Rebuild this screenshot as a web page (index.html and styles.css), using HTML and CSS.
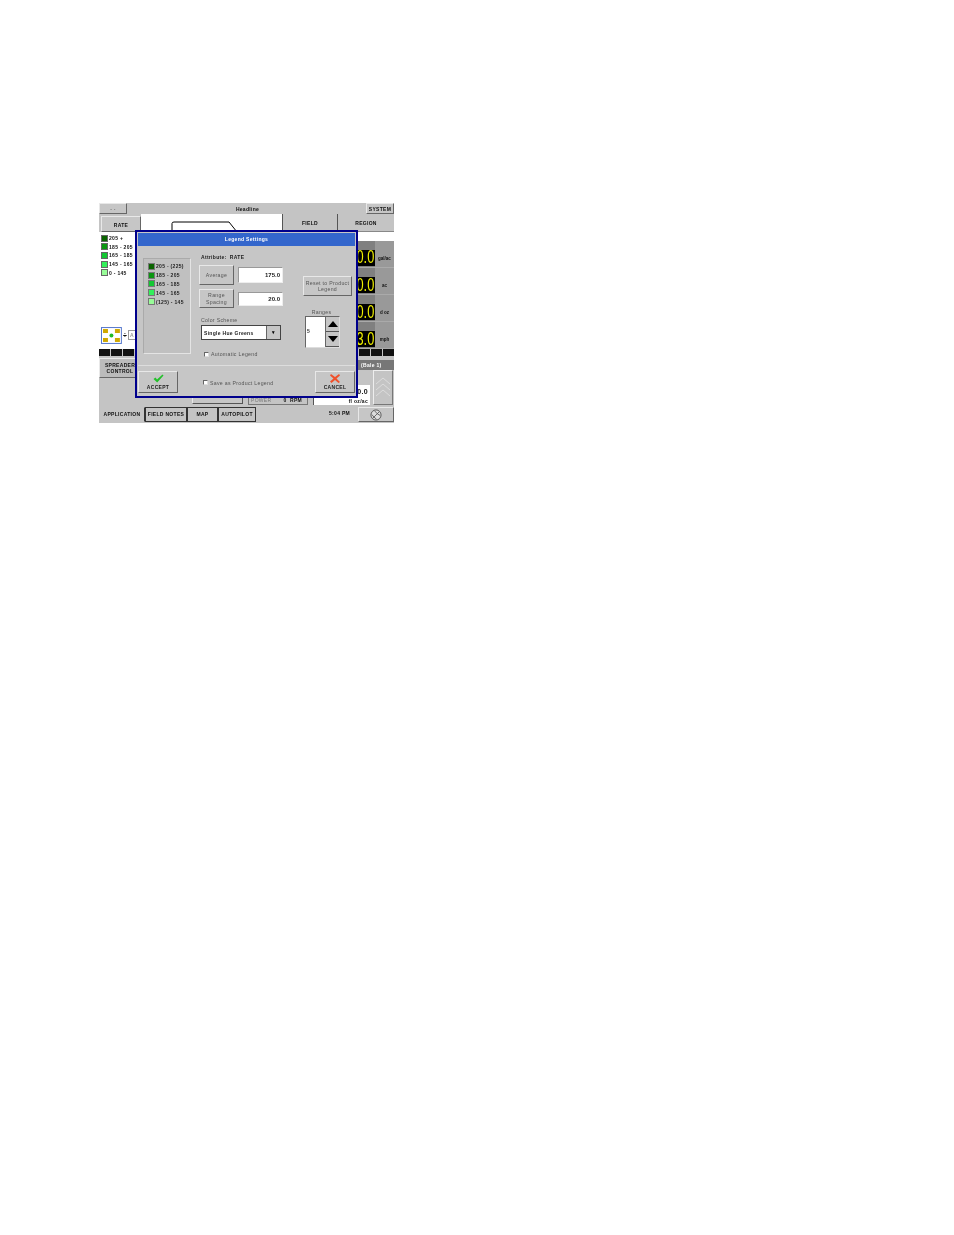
FILE: index.html
```html
<!DOCTYPE html>
<html lang="en">
<head>
<meta charset="utf-8">
<title>Legend Settings</title>
<link rel="stylesheet" href="styles.css">
</head>
<body>
<div class="app">
  <div class="topbar">
    <div class="btn dash">- -</div>
    <div class="headline">Headline</div>
    <div class="btn system">SYSTEM</div>
  </div>
  <div class="tabs2">
    <div class="rate btn">RATE</div>
    <div class="mapstrip">
      <svg class="boundary" width="141" height="18" viewBox="0 0 141 18"><path d="M31 18V9.500Q31 8 33 8H88L96 18" fill="none" stroke="#000" stroke-width="1"/></svg>
    </div>
    <div class="tab2 field">FIELD</div>
    <div class="tab2 region">REGION</div>
  </div>
  <div class="middle">
    <div class="legend">
      <div class="lrow"><i class="sw c1"></i>205 +</div>
      <div class="lrow"><i class="sw c2"></i>185 - 205</div>
      <div class="lrow"><i class="sw c3"></i>165 - 185</div>
      <div class="lrow"><i class="sw c4"></i>145 - 165</div>
      <div class="lrow"><i class="sw c5"></i>0 - 145</div>
      <div class="zoomctl">
        <svg width="21" height="17" viewBox="0 0 21 17"><rect x=".5" y=".5" width="20" height="16" fill="#fff" stroke="#5577cc"/><g fill="#d0a800"><rect x="2" y="2" width="5" height="4"/><rect x="14" y="2" width="5" height="4"/><rect x="2" y="11" width="5" height="4"/><rect x="14" y="11" width="5" height="4"/></g><circle cx="10.500" cy="8.500" r="2" fill="#22bb22"/></svg>
        <span class="updown">÷</span>
        <span class="small">A</span>
      </div>
    </div>
    <div class="mapmain"></div>
    <div class="readouts">
      <div class="top-white"></div>
      <div class="ro"><span class="digits"><span class="seg">0.0</span></span><span class="unit">gal/ac</span></div>
      <div class="ro"><span class="digits"><span class="seg">0.0</span></span><span class="unit">ac</span></div>
      <div class="ro"><span class="digits"><span class="seg">0.0</span></span><span class="unit">d oz</span></div>
      <div class="ro"><span class="digits"><span class="seg">3.0</span></span><span class="unit">mph</span></div>
    </div>
  </div>
  <div class="blackband">
    <i></i><i></i><i></i><b></b><i></i><i></i><i></i>
  </div>
  <div class="lower">
    <div class="spreader btn">SPREADER<br>CONTROL</div>
    <div class="btn wide"></div>
    <div class="rpm"><span class="power">POWER</span><span>0&nbsp;&nbsp;RPM</span></div>
    <div class="rightcol">
      <div class="baletitle">(Bale 1)</div>
      <div class="flowrow">
        <div class="flow">
          <div class="flowval">0.0</div>
          <div class="flowunit">fl oz/ac</div>
        </div>
        <div class="chev">
          <svg width="16" height="24" viewBox="0 0 16 24"><path d="M1 8 8 2 15 8M1 14 8 8 15 14M1 20 8 14 15 20" fill="none" stroke="#dcdcdc"/></svg>
        </div>
      </div>
    </div>
  </div>
  <div class="bottombar">
    <div class="bt on">APPLICATION</div>
    <div class="bt notes">FIELD NOTES</div>
    <div class="bt map">MAP</div>
    <div class="bt auto">AUTOPILOT</div>
    <div class="time">5:04 PM</div>
    <div class="globe btn"><svg width="12" height="12" viewBox="0 0 13 13"><circle cx="6.500" cy="6.500" r="5.500" fill="#ddd" stroke="#555"/><path d="M3 10 10 3M5 2Q8 6 11 7M2 6Q4 9 7 11" fill="none" stroke="#555" stroke-width=".9"/></svg></div>
  </div>

  <div class="dialog">
    <div class="dtitle">Legend Settings</div>
    <div class="dbody">
      <div class="dlegend">
        <div class="drow"><i class="dsw c1"></i>205 - (225)</div>
        <div class="drow"><i class="dsw c2"></i>185 - 205</div>
        <div class="drow"><i class="dsw c3"></i>165 - 185</div>
        <div class="drow"><i class="dsw c4"></i>145 - 165</div>
        <div class="drow"><i class="dsw c5"></i>(125) - 145</div>
      </div>
      <div class="dcenter">
        <div class="attr">Attribute:&nbsp; RATE</div>
        <div class="field-row first">
          <div class="btn gbtn avg">Average</div>
          <div class="input">175.0</div>
        </div>
        <div class="field-row second">
          <div class="btn gbtn spc">Range<br>Spacing</div>
          <div class="input short">20.0</div>
        </div>
        <div class="schemelabel">Color Scheme</div>
        <div class="select"><span class="seltext">Single Hue Greens</span><span class="selarrow">▾</span></div>
        <label class="check auto-l"><i class="cb"></i>Automatic Legend</label>
      </div>
      <div class="dright">
        <div class="btn gbtn reset">Reset to Product<br>Legend</div>
        <div class="rangeslabel">Ranges</div>
        <div class="spinner">
          <div class="spinval">5</div>
          <div class="spinbtns">
            <div class="spb"><svg width="10" height="6" viewBox="0 0 10 6"><path d="M5 0 10 6H0Z" fill="#000"/></svg></div>
            <div class="spb"><svg width="10" height="6" viewBox="0 0 10 6"><path d="M0 0H10L5 6Z" fill="#000"/></svg></div>
          </div>
        </div>
      </div>
    </div>
    <div class="dfoot">
      <div class="btn action">
        <svg width="11" height="9" viewBox="0 0 11 9"><path d="M0.500 5 2.500 3.500 4 5.500 9.500 0.500 10.500 1.500 4.200 8.500Z" fill="#22c02a"/></svg>
        <span>ACCEPT</span>
      </div>
      <label class="check save"><i class="cb"></i>Save as Product Legend</label>
      <div class="btn action">
        <svg width="10" height="9" viewBox="0 0 10 9"><path d="M1 0 5 3 9 0 10 1.500 6.500 4.500 10 8 8.500 9 5 6 1.500 9 0 7.500 3.500 4.500 0 1.500Z" fill="#f0502a"/></svg>
        <span>CANCEL</span>
      </div>
    </div>
  </div>
</div>
</body>
</html>
```
FILE: styles.css
```css
* { box-sizing: border-box; }
html, body { margin: 0; background: #fff; }
body { height: 1235px; padding: 203px 0 0 99px; font-family: "Liberation Sans", Arial, sans-serif; overflow: hidden; }
.app { position: relative; width: 295px; height: 220px; background: #c4c4c4; display: flex; flex-direction: column; font-size: 5px; letter-spacing: .3px; color: #111; filter: blur(.35px); }
.btn { background: #c6c6c6; border: 1px solid; border-color: #e8e8e8 #666 #666 #e8e8e8; display: flex; align-items: center; justify-content: center; text-align: center; }
.topbar { height: 11px; display: flex; align-items: stretch; }
.dash { width: 28px; color: #555; }
.headline { flex: 1; text-align: center; font-weight: 700; line-height: 12px; padding-left: 2px; }
.system { width: 28px; font-weight: 700; }
.tabs2 { height: 18px; display: flex; }
.rate { width: 40px; margin-left: 2px; margin-top: 2px; padding-top: 2px; font-weight: 700; }
.mapstrip { width: 141px; background: #fff; }
.boundary { display: block; }
.tab2 { display: flex; align-items: center; justify-content: center; font-weight: 700; border-left: 1px solid #555; border-bottom: 1px solid #888; background: #c4c4c4; }
.field { width: 55px; }
.region { width: 57px; }
.middle { height: 117px; display: flex; background: #fff; }
.legend { width: 37px; padding: 2px 0 0 2px; display: flex; flex-direction: column; font-weight: 700; font-size: 5px; }
.lrow { display: flex; align-items: center; gap: 1px; height: 8.600px; white-space: nowrap; }
.sw { width: 7px; height: 7px; border: 1px solid #666; flex: none; }
.c1 { background: #0a6400; }
.c2 { background: #0a9610; }
.c3 { background: #12c832; }
.c4 { background: #32f05a; }
.c5 { background: #98fc98; }
.zoomctl { margin-top: 50px; display: flex; align-items: center; gap: 1px; }
.updown { font-size: 7px; }
.small { width: 8px; height: 10px; border: 1px solid #999; color: #999; text-align: center; line-height: 8px; }
.mapmain { flex: 1; }
.readouts { width: 37px; display: flex; flex-direction: column; background: #808080; }
.top-white { height: 9px; background: #fff; }
.ro { height: 27px; display: flex; align-items: stretch; justify-content: flex-end; border-bottom: 1px solid #aaa; }
.digits { width: 18px; margin: 9px 0 1px; background: #000; display: flex; align-items: center; justify-content: flex-end; padding-right: 1px; }
.seg { display: block; flex: none; color: #f0f000; font-size: 16px; line-height: 16px; letter-spacing: 0; transform: scale(.8, 1.1); transform-origin: right center; white-space: nowrap; }
.unit { width: 19px; font-weight: 700; font-size: 4.500px; letter-spacing: 0; background: #999; display: flex; align-items: center; justify-content: center; padding-top: 8px; }
.blackband { height: 8px; background: #c4c4c4; display: flex; gap: 1px; padding-bottom: 1px; }
.blackband i { width: 11px; background: #111; }
.blackband b { flex: 1; }
.lower { height: 50px; display: flex; background: #c4c4c4; }
.spreader { width: 42px; height: 20px; margin-top: 1px; font-weight: 700; line-height: 6px; background: #bbb; }
.wide { width: 51px; height: 20px; margin: 27px 0 0 51px; flex: none; border-color: #e8e8e8 #555 #555 #e8e8e8; }
.rpm { width: 60px; height: 10px; margin: 38px 0 0 5px; border: 1px solid #777; border-top: 0; display: flex; justify-content: space-between; align-items: center; font-weight: 700; padding: 0 5px 0 2px; flex: none; }
.power { color: #777; font-weight: 400; }
.rightcol { width: 81px; margin-left: 5px; display: flex; flex-direction: column; padding-top: 3px; }
.baletitle { height: 10px; margin-left: 45px; background: #777; color: #fff; font-weight: 700; line-height: 10px; padding-left: 3px; }
.flowrow { display: flex; align-items: flex-end; height: 35px; }
.flow { width: 57px; height: 20px; background: #fff; border-left: 1px solid #555; display: flex; flex-direction: column; align-items: flex-end; font-weight: 700; padding-right: 2px; }
.flowval { font-size: 7px; line-height: 13px; }
.flowunit { line-height: 6px; }
.chev { width: 20px; height: 35px; margin-left: 3px; border: 1px solid; border-color: #eee #777 #777 #eee; display: flex; align-items: center; justify-content: center; }
.bottombar { height: 15px; display: flex; align-items: stretch; font-weight: 700; background: #c4c4c4; }
.bt { display: flex; align-items: center; justify-content: center; border: 1px solid #333; padding-bottom: 2px; }
.bt.on { width: 46px; border-color: transparent #333 transparent transparent; }
.notes { width: 42px; }
.map { width: 31px; }
.auto { width: 38px; }
.time { width: 102px; text-align: right; line-height: 13px; padding-right: 8px; }
.globe { width: 36px; }

.dialog { position: absolute; left: 36px; top: 27px; width: 223px; height: 168px; background: #c6c6c6; border: 2px solid #00008c; display: flex; flex-direction: column; padding: 1px; color: #333; }
.dtitle { height: 13px; background: #3366cc; color: #fff; font-weight: 700; text-align: center; line-height: 13px; flex: none; }
.dbody { flex: none; height: 120px; display: flex; padding: 12px 0 0 5px; border-bottom: 1px solid #ddd; }
.dlegend { width: 48px; height: 96px; background: #c0c0c0; border: 1px solid; border-color: #aaa #e4e4e4 #e4e4e4 #aaa; padding: 3px 0 0 4px; font-weight: 700; color: #222; flex: none; }
.drow { display: flex; align-items: center; gap: 1px; height: 8.800px; white-space: nowrap; }
.dsw { width: 7px; height: 7px; border: 1px solid #777; flex: none; }
.dcenter { width: 92px; margin-left: 8px; display: flex; flex-direction: column; margin-top: -4px; }
.attr { font-weight: 700; height: 7px; line-height: 7px; padding-left: 2px; color: #222; }
.field-row { display: flex; align-items: center; gap: 4px; }
.field-row.first { margin-top: 4px; height: 20px; }
.field-row.second { margin-top: 4px; height: 19px; }
.gbtn { color: #555; line-height: 6.500px; font-size: 5.200px; }
.avg { width: 35px; height: 20px; }
.spc { width: 35px; height: 19px; }
.input { width: 45px; height: 16px; background: #fff; border: 1px solid; border-color: #999 #eee #eee #999; text-align: right; padding-right: 2px; line-height: 14px; font-weight: 700; font-size: 6px; color: #222; letter-spacing: 0; }
.input.short { height: 14px; line-height: 12px; }
.schemelabel { margin-top: 9px; padding-left: 2px; height: 6px; line-height: 6px; color: #555; font-size: 5.200px; }
.select { width: 80px; height: 15px; margin: 2px 0 0 2px; background: #fff; border: 1px solid #444; display: flex; align-items: center; font-weight: 700; color: #222; }
.seltext { flex: 1; padding-left: 2px; white-space: nowrap; }
.selarrow { width: 14px; height: 13px; background: #c6c6c6; border-left: 1px solid #666; text-align: center; line-height: 13px; color: #000; }
.check { display: flex; align-items: center; gap: 2px; color: #555; font-size: 5.200px; white-space: nowrap; }
.cb { width: 5px; height: 5px; background: #fff; border: 1px solid; border-color: #666 #ddd #ddd #666; flex: none; }
.auto-l { margin: 11px 0 0 5px; }
.dright { width: 50px; margin-left: 12px; display: flex; flex-direction: column; padding-top: 18px; }
.reset { width: 49px; height: 20px; }
.rangeslabel { text-align: center; margin-top: 13px; color: #555; font-size: 5.200px; height: 6px; line-height: 6px; width: 37px; }
.spinner { width: 35px; height: 32px; margin: 1px 0 0 2px; display: flex; background: #fff; border: 1px solid; border-color: #666 #ddd #ddd #666; }
.spinval { flex: 1; line-height: 28px; padding-left: 1px; font-weight: 700; }
.spinbtns { width: 14px; display: flex; flex-direction: column; border-left: 1px solid #666; }
.spb { flex: 1; background: #c6c6c6; border-bottom: 1px solid #555; display: flex; align-items: center; justify-content: center; }
.dfoot { flex: 1; display: flex; align-items: flex-end; justify-content: space-between; padding: 0 0 2px; }
.action { width: 40px; height: 22px; flex-direction: column; gap: 1px; font-weight: 700; color: #222; }
.save { flex: 1; margin-left: 25px; align-self: center; margin-top: 6px; }
```
